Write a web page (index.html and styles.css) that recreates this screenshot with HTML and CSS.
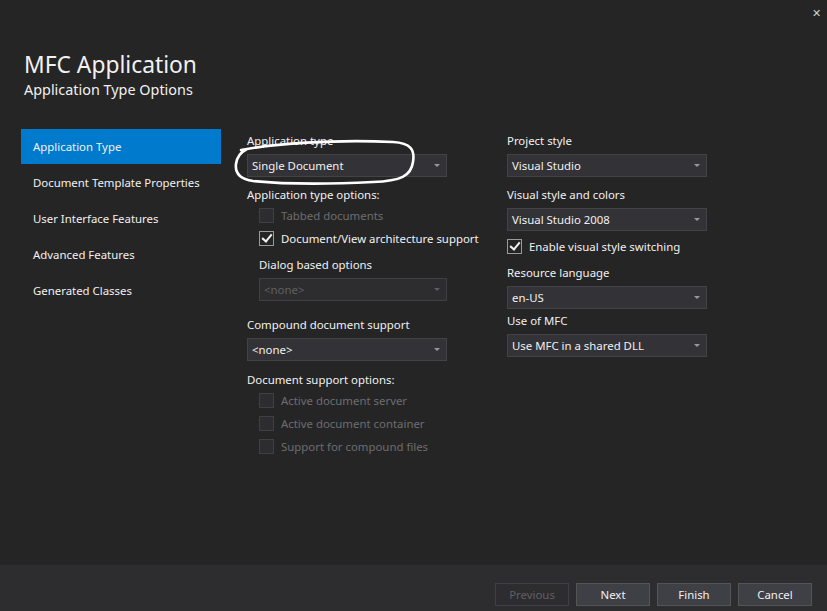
FILE: index.html
```html
<!DOCTYPE html>
<html lang="en">
<head>
    <meta charset="UTF-8">
    <title>MFC Application Wizard</title>
    <link rel="stylesheet" href="styles.css">
</head>
<body>
    <div class="dialog">
        <div class="close">&#x2715;</div>

        <div class="header">
            <h1>MFC Application</h1>
            <h2>Application Type Options</h2>
        </div>

        <div class="main">
            <div class="nav">
                <div class="nav-item active">Application Type</div>
                <div class="nav-item">Document Template Properties</div>
                <div class="nav-item">User Interface Features</div>
                <div class="nav-item">Advanced Features</div>
                <div class="nav-item">Generated Classes</div>
            </div>

            <div class="column">
                <div class="label">Application type</div>
                <div class="select">Single Document<span class="arrow"></span></div>

                <div class="label mt-10">Application type options:</div>
                <div class="check-row disabled"><span class="box"></span>Tabbed documents</div>
                <div class="check-row"><span class="box checked"></span>Document/View architecture support</div>

                <div class="indent">
                    <div class="label mt-7">Dialog based options</div>
                    <div class="select disabled">&lt;none&gt;<span class="arrow"></span></div>
                </div>

                <div class="label mt-16">Compound document support</div>
                <div class="select">&lt;none&gt;<span class="arrow"></span></div>

                <div class="label mt-11">Document support options:</div>
                <div class="check-row disabled first"><span class="box"></span>Active document server</div>
                <div class="check-row disabled"><span class="box"></span>Active document container</div>
                <div class="check-row disabled"><span class="box"></span>Support for compound files</div>
            </div>

            <div class="column">
                <div class="label">Project style</div>
                <div class="select">Visual Studio<span class="arrow"></span></div>

                <div class="label mt-10">Visual style and colors</div>
                <div class="select">Visual Studio 2008<span class="arrow"></span></div>
                <div class="check-row outdent"><span class="box checked"></span>Enable visual style switching</div>

                <div class="label mt-7">Resource language</div>
                <div class="select">en-US<span class="arrow"></span></div>

                <div class="label mt-4">Use of MFC</div>
                <div class="select">Use MFC in a shared DLL<span class="arrow"></span></div>
            </div>
        </div>

        <div class="footer">
            <button class="btn" disabled>Previous</button>
            <button class="btn">Next</button>
            <button class="btn">Finish</button>
            <button class="btn">Cancel</button>
        </div>

        <!-- hand drawn annotation round the first dropdown -->
        <svg class="scribble" width="200" height="60" viewBox="0 0 200 60">
            <path d="M8 14 C 40 8, 100 3, 160 6 C 178 7, 182 14, 180 26 C 178 40, 168 45, 140 46 C 100 48, 50 48, 20 45 C 6 43, 2 36, 3 28 C 4 20, 8 16, 14 13"
                  fill="none" stroke="#ffffff" stroke-width="2.6" stroke-linecap="round"/>
        </svg>
    </div>
</body>
</html>
```

FILE: styles.css
```css
body {
    margin: 0;
    background-color: #252526;
    font-family: "Noto Sans", "Open Sans", sans-serif;
    color: #f1f1f1;
}
.dialog {
    position: relative;
    width: 827px;
    height: 611px;
    display: flex;
    flex-direction: column;
    overflow: hidden;
    white-space: nowrap;
}
.close {
    position: absolute;
    top: 5px;
    right: 6px;
    font-size: 11px;
    color: #d0d0d0;
}
.header {
    padding: 50px 0 0 24px;
}
.header h1 {
    margin: 0;
    font-size: 22.8px;
    font-weight: normal;
    line-height: 30px;
}
.header h2 {
    margin: 0;
    font-size: 14.4px;
    font-weight: normal;
    line-height: 20px;
}
.main {
    flex: 1;
    display: flex;
    margin-top: 29px;
    padding-left: 21px;
}
.nav {
    width: 200px;
    margin-right: 26px;
}
.nav-item {
    height: 36px;
    line-height: 35px;
    padding-left: 12px;
    font-size: 11.4px;
}
.nav-item.active {
    background: #007acc;
    height: 35px;
    margin-bottom: 1px;
}
.column {
    width: 200px;
    margin-right: 60px;
    padding-top: 4px;
}
.label {
    font-size: 11.4px;
    line-height: 16px;
    height: 16px;
}
.mt-4 { margin-top: 4px; }
.mt-7 { margin-top: 7px; }
.mt-10 { margin-top: 10px; }
.mt-11 { margin-top: 11px; }
.mt-16 { margin-top: 16px; }
.select {
    position: relative;
    box-sizing: border-box;
    height: 23px;
    margin-top: 5px;
    padding-left: 4px;
    line-height: 21px;
    font-size: 11.4px;
    background: #333337;
    border: 1px solid #434346;
}
.select.disabled {
    background: #2d2d30;
    border-color: #3f3f46;
    color: #5f5f62;
}
.arrow {
    position: absolute;
    right: 6px;
    top: 9px;
    width: 0;
    height: 0;
    border-left: 3px solid transparent;
    border-right: 3px solid transparent;
    border-top: 3px solid #999999;
}
.select.disabled .arrow {
    border-top-color: #5f5f62;
}
.indent {
    padding-left: 12px;
}
.check-row {
    display: flex;
    align-items: center;
    height: 23px;
    padding-left: 12px;
    font-size: 11.4px;
}
.label + .check-row {
    margin-top: 1px;
}
.check-row.first {
    margin-top: 1px;
}
.check-row.outdent {
    padding-left: 0;
    margin-top: 4px;
}
.check-row.disabled {
    color: #6d6d70;
}
.box {
    position: relative;
    flex-shrink: 0;
    box-sizing: border-box;
    width: 15px;
    height: 15px;
    margin-right: 7px;
    background: #2d2d30;
    border: 1px solid #3f3f46;
}
.box.checked {
    background: #252526;
    border-color: #9a9a9a;
}
.box.checked::after {
    content: "";
    position: absolute;
    left: 4px;
    top: 0px;
    width: 4px;
    height: 8px;
    border-right: 2px solid #f1f1f1;
    border-bottom: 2px solid #f1f1f1;
    transform: rotate(40deg);
}
.footer {
    height: 46px;
    background: #2d2d30;
    display: flex;
    justify-content: flex-end;
    align-items: flex-start;
    gap: 7px;
    padding: 18px 15px 0 0;
    box-sizing: border-box;
}
.btn {
    width: 74px;
    height: 23px;
    padding: 0;
    background: #3f3f46;
    border: 1px solid #555555;
    color: #f1f1f1;
    font-family: "Noto Sans", "Open Sans", sans-serif;
    font-size: 11.4px;
}
.btn:disabled {
    background: #2d2d30;
    border-color: #3f3f46;
    color: #5f5f62;
}
.scribble {
    position: absolute;
    left: 233px;
    top: 136px;
}
```
